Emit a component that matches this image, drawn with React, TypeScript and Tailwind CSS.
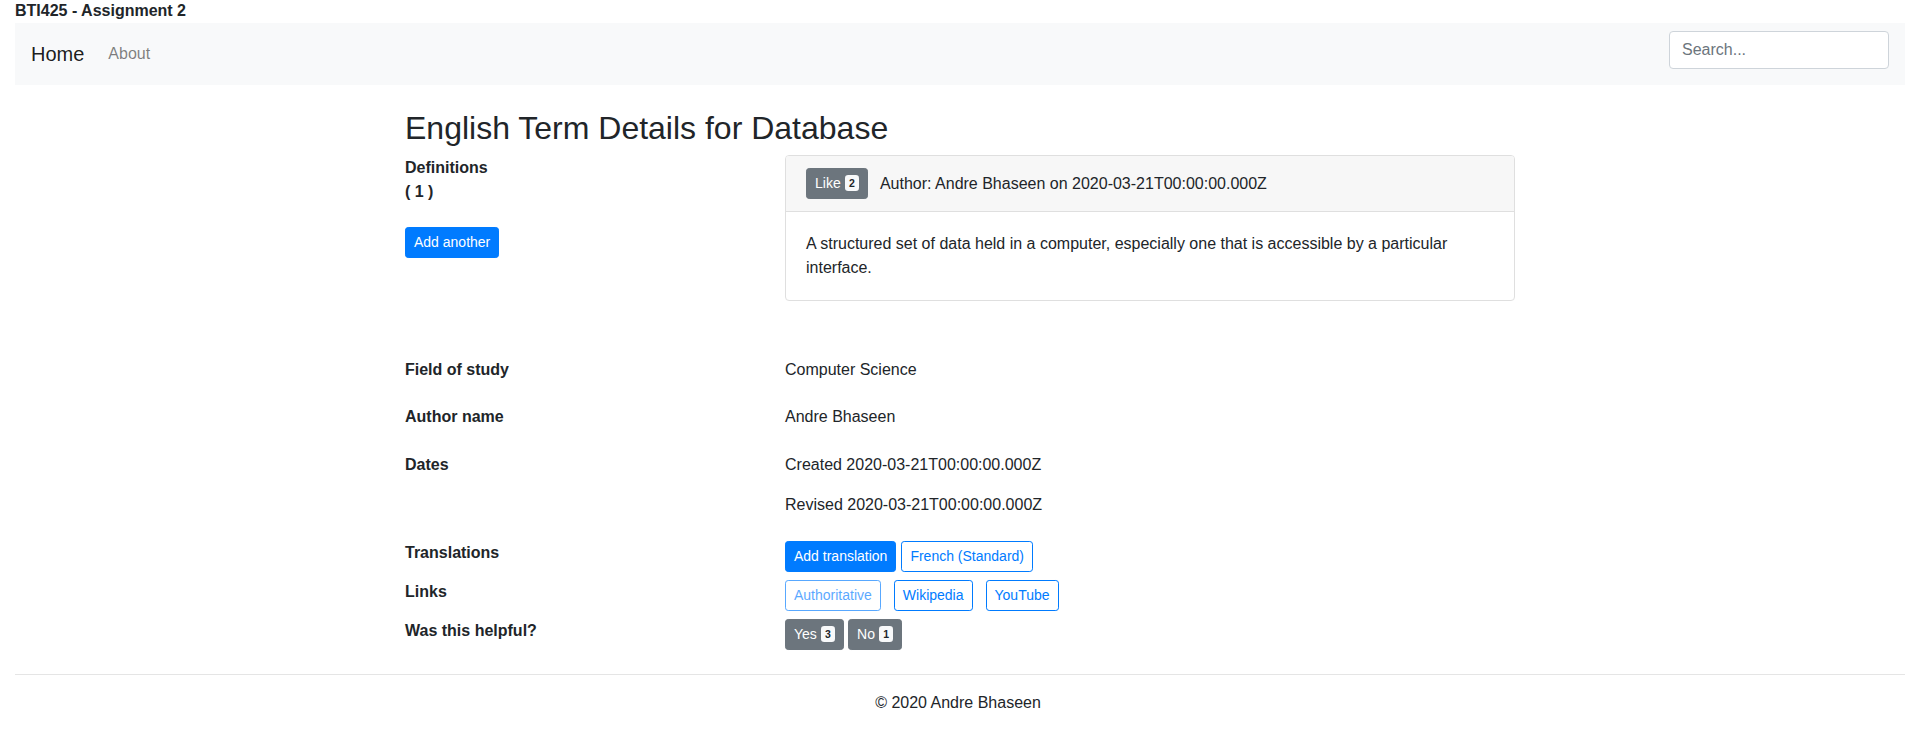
import React from 'react';

const Badge: React.FC<{ value: number }> = ({ value }) => (
    <span className="relative -top-px ml-[4px] inline-block rounded-[3.2px] bg-[#f8f9fa] px-[4.2px] py-[2.6px] align-baseline text-[10.5px] font-bold leading-none text-[#212529]">
        {value}
    </span>
);

const btnBase = 'inline-block rounded-[3.2px] border px-[8px] py-[4px] text-[14px] leading-[21px] whitespace-nowrap';

const App: React.FC = () => {
    return (
        <div className="bg-white font-['Liberation_Sans',Arial,sans-serif] text-[16px] leading-6 text-[#212529]">
            {/* Page title */}
            <div className="h-[23px] pl-[15px] text-[16px] font-bold leading-[22px]">BTI425 - Assignment 2</div>

            {/* Navbar */}
            <nav className="ml-[15px] mr-[11px] flex h-[62px] items-center bg-[#f8f9fa] pl-[16px] pr-[16px]">
                <a className="mr-[16px] text-[20px] leading-[30px] text-[#000000e6]">Home</a>
                <a className="px-[8px] text-[16px] leading-6 text-[#00000080]">About</a>
                <div className="flex-1" />
                <input
                    placeholder="Search..."
                    className="mb-[16px] mt-[8px] h-[38px] w-[220px] self-start rounded-[4px] border border-[#ced4da] bg-white px-[12px] py-[6px] text-[16px] text-[#495057] placeholder:text-[#6c757d] focus:outline-none"
                />
            </nav>

            {/* Content */}
            <main className="mx-auto w-[1114px] pl-[4px] pt-[24px]">
                <h2 className="mb-[8px] text-[32px] font-normal leading-[38px]">English Term Details for Database</h2>

                <div className="grid grid-cols-[380px_1fr]">
                    <div className="pt-[1px]">
                        <div className="font-bold">Definitions</div>
                        <div className="font-bold">( 1 )</div>
                        <button className={`${btnBase} mt-[23px] border-[#007bff] bg-[#007bff] text-white`}>Add another</button>
                    </div>
                    <div className="self-start rounded-[4px] border border-[#dfdfdf]">
                        <div className="flex items-center rounded-t-[3px] border-b border-[#dfdfdf] bg-[#f7f7f7] px-[20px] py-[12px]">
                            <button className={`${btnBase} border-[#6c757d] bg-[#6c757d] text-white`}>
                                Like<Badge value={2} />
                            </button>
                            <span className="ml-[12px]">Author: Andre Bhaseen on 2020-03-21T00:00:00.000Z</span>
                        </div>
                        <div className="p-[20px]">
                            A structured set of data held in a computer, especially one that is accessible by a particular interface.
                        </div>
                    </div>
                </div>

                {/* Details */}
                <div className="mt-[57px] grid grid-cols-[380px_1fr]">
                    <div className="font-bold">Field of study</div>
                    <div>Computer Science</div>
                </div>
                <div className="mt-[23px] grid grid-cols-[380px_1fr]">
                    <div className="font-bold">Author name</div>
                    <div>Andre Bhaseen</div>
                </div>
                <div className="mt-[24px] grid grid-cols-[380px_1fr]">
                    <div className="font-bold">Dates</div>
                    <div>
                        <p className="mb-[16px]">Created 2020-03-21T00:00:00.000Z</p>
                        <p>Revised 2020-03-21T00:00:00.000Z</p>
                    </div>
                </div>
                <div className="mt-[24px] grid grid-cols-[380px_1fr]">
                    <div className="font-bold">Translations</div>
                    <div className="flex">
                        <button className={`${btnBase} border-[#007bff] bg-[#007bff] text-white`}>Add translation</button>
                        <button className={`${btnBase} ml-[5px] border-[#007bff] bg-transparent text-[#007bff]`}>French (Standard)</button>
                    </div>
                </div>
                <div className="mt-[8px] grid grid-cols-[380px_1fr]">
                    <div className="font-bold">Links</div>
                    <div className="flex">
                        <button className={`${btnBase} border-[#007bff] bg-transparent text-[#007bff] opacity-65`}>Authoritative</button>
                        <button className={`${btnBase} ml-[13px] border-[#007bff] bg-transparent text-[#007bff]`}>Wikipedia</button>
                        <button className={`${btnBase} ml-[13px] border-[#007bff] bg-transparent text-[#007bff]`}>YouTube</button>
                    </div>
                </div>
                <div className="mt-[8px] grid grid-cols-[380px_1fr]">
                    <div className="font-bold">Was this helpful?</div>
                    <div className="flex">
                        <button className={`${btnBase} border-[#6c757d] bg-[#6c757d] text-white`}>
                            Yes<Badge value={3} />
                        </button>
                        <button className={`${btnBase} ml-[4px] border-[#6c757d] bg-[#6c757d] text-white`}>
                            No<Badge value={1} />
                        </button>
                    </div>
                </div>
            </main>

            {/* Footer */}
            <hr className="ml-[15px] mr-[11px] mt-[24px] border-0 border-t border-[#e5e5e5]" />
            <footer className="pb-[15px] pt-[16px] text-center">&copy; 2020 Andre Bhaseen</footer>
        </div>
    );
};

export default App;
